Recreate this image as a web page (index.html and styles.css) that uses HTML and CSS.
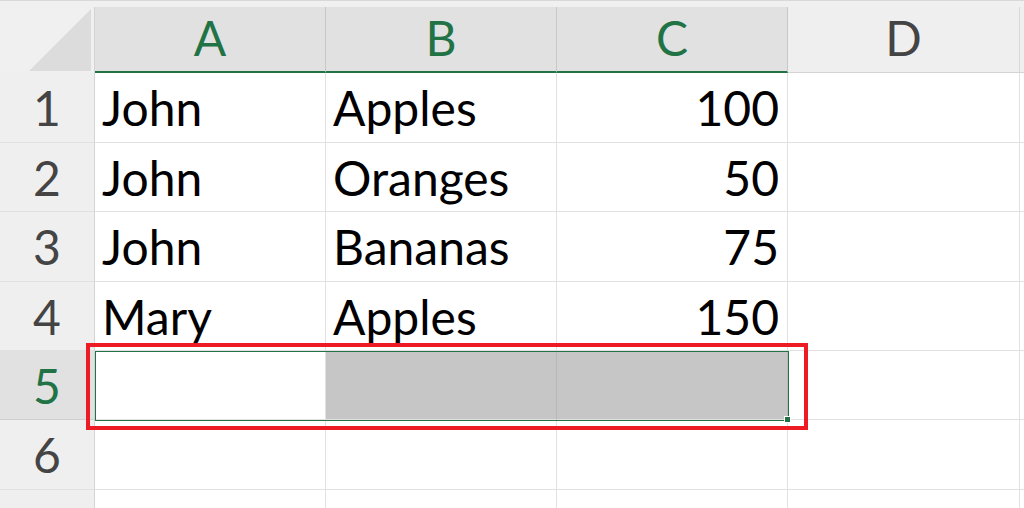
FILE: index.html
```html
<!DOCTYPE html>
<html>
<head>
<meta charset="utf-8">
<link rel="stylesheet" href="styles.css">
</head>
<body>
<div class="sheet">
  <div class="topstrip"></div>
  <div class="grid">
    <div class="corner"><svg class="tri" width="62" height="62" viewBox="0 0 62 62"><polygon points="62,0 62,62 0,62" fill="#dcdcdc"/></svg></div>
    <div class="colhead sel">A</div>
    <div class="colhead sel">B</div>
    <div class="colhead sel">C</div>
    <div class="colhead">D</div>
    <div class="colhead tail"></div>

    <div class="rowhead">1</div>
    <div class="cell">John</div>
    <div class="cell">Apples</div>
    <div class="cell num">100</div>
    <div class="cell"></div>
    <div class="cell tail"></div>

    <div class="rowhead">2</div>
    <div class="cell">John</div>
    <div class="cell">Oranges</div>
    <div class="cell num">50</div>
    <div class="cell"></div>
    <div class="cell tail"></div>

    <div class="rowhead">3</div>
    <div class="cell">John</div>
    <div class="cell">Bananas</div>
    <div class="cell num">75</div>
    <div class="cell"></div>
    <div class="cell tail"></div>

    <div class="rowhead">4</div>
    <div class="cell">Mary</div>
    <div class="cell">Apples</div>
    <div class="cell num">150</div>
    <div class="cell"></div>
    <div class="cell tail"></div>

    <div class="rowhead selrow">5</div>
    <div class="cell"></div>
    <div class="cell shaded"></div>
    <div class="cell shaded"></div>
    <div class="cell"></div>
    <div class="cell tail"></div>

    <div class="rowhead">6</div>
    <div class="cell"></div>
    <div class="cell"></div>
    <div class="cell"></div>
    <div class="cell"></div>
    <div class="cell tail"></div>

    <div class="rowhead"></div>
    <div class="cell"></div>
    <div class="cell"></div>
    <div class="cell"></div>
    <div class="cell"></div>
    <div class="cell tail"></div>

    <div class="selection"><span class="handle"></span></div>
    <div class="highlight"></div>
  </div>
</div>
</body>
</html>
```

FILE: styles.css
```css
html, body {
  margin: 0;
  padding: 0;
  background: #ffffff;
}

.sheet {
  width: 1024px;
  height: 508px;
  overflow: hidden;
  font-family: Lato, "Open Sans", sans-serif;
}

.topstrip {
  height: 7px;
  background: #f0f0f0;
  border-top: 1px solid #d8d8d8;
  box-sizing: border-box;
}

.grid {
  position: relative;
  display: grid;
  grid-template-columns: 95px 231px 231px 231px 232px 4px;
  grid-template-rows: 66px 70px 69px 70px 69px 69px 70px 20px;
}

.corner {
  background: #f0f0f0;
  border-right: 1px solid #d4d4d4;
  box-sizing: border-box;
  display: flex;
  align-items: flex-end;
  justify-content: flex-end;
  padding: 0 3px 2px 0;
}

.colhead {
  background: #efefef;
  color: #444444;
  font-size: 48px;
  line-height: 58px;
  text-align: center;
  padding-top: 2px;
  box-sizing: border-box;
  border-right: 1px solid #d8d8d8;
  border-bottom: 1px solid #d4d4d4;
}

.colhead.sel {
  background: #e1e1e1;
  color: #217346;
  border-right-color: #c8c8c8;
  border-bottom: 2px solid #217346;
}

.rowhead {
  background: #efefef;
  color: #444444;
  font-size: 48px;
  line-height: 58px;
  text-align: center;
  padding-top: 6px;
  box-sizing: border-box;
  border-right: 1px solid #d4d4d4;
  border-bottom: 1px solid #e0e0e0;
}

.rowhead.selrow {
  background: #e1e1e1;
  color: #217346;
  border-bottom-color: #cfcfcf;
}

.cell {
  background: #ffffff;
  color: #000000;
  font-size: 48px;
  line-height: 58px;
  padding: 6px 8px 0 7px;
  box-sizing: border-box;
  border-right: 1px solid #e1e1e1;
  border-bottom: 1px solid #e1e1e1;
  white-space: nowrap;
  overflow: hidden;
}

.cell.num {
  text-align: right;
  padding-right: 8px;
}

.cell.shaded {
  background: #c6c6c6;
  border-right-color: #b8b8b8;
}

.tail {
  border-right: none;
}

.selection {
  position: absolute;
  left: 95px;
  top: 344px;
  width: 694px;
  height: 70px;
  border: 1px solid #217346;
  box-sizing: border-box;
}

.handle {
  position: absolute;
  right: -3px;
  bottom: -3px;
  width: 5px;
  height: 5px;
  background: #217346;
  border: 1px solid #ffffff;
}

.highlight {
  position: absolute;
  left: 86px;
  top: 336px;
  width: 722px;
  height: 87px;
  border: 4px solid #ed1c24;
  box-sizing: border-box;
}
```
